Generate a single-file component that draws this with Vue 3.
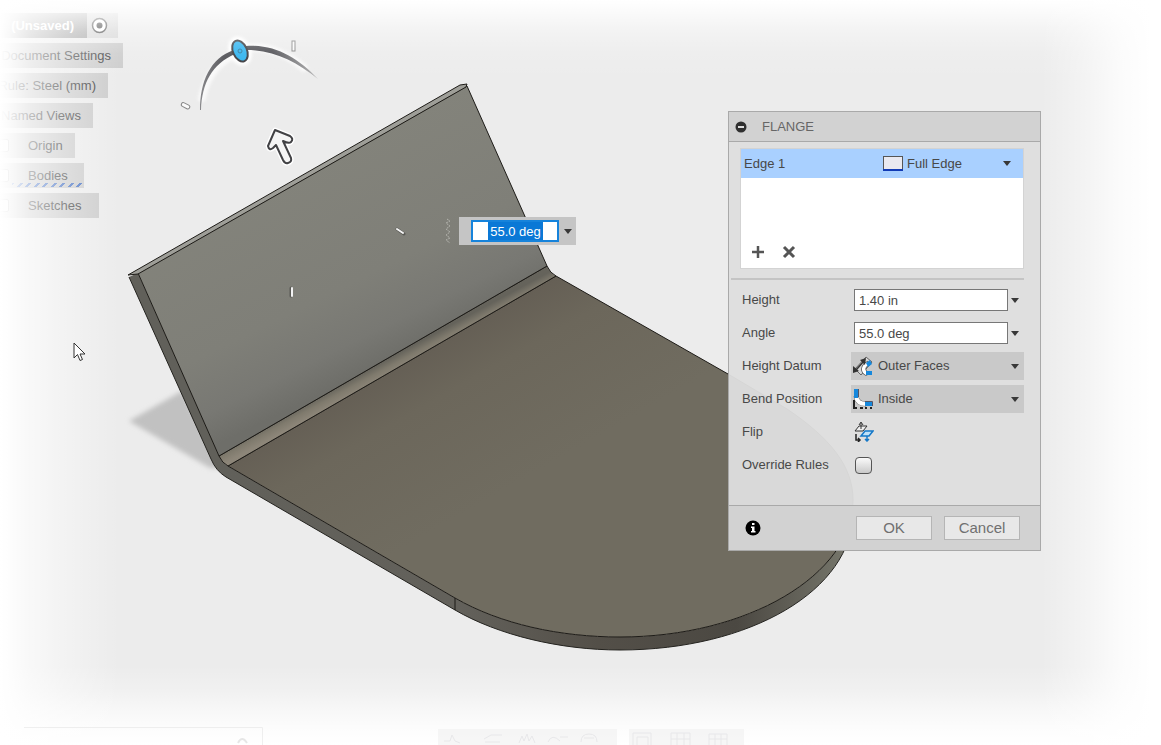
<script setup>
import { ref } from 'vue'

const tree = [
  { label: 'Document Settings', cls: 'w-doc' },
  { label: 'Rule: Steel (mm)', cls: 'w-rule' },
  { label: 'Named Views', cls: 'w-views' },
  { label: 'Origin', cls: 'boxed w-origin', box: true },
  { label: 'Bodies', cls: 'boxed w-bodies', box: true },
  { label: 'Sketches', cls: 'boxed w-sketches', box: true }
]
const height = ref('1.40 in')
const angle = ref('55.0 deg')
const datum = ref('Outer Faces')
const bend = ref('Inside')
const edgeType = ref('Full Edge')
const override = ref(false)
</script>

<template>
  <main class="viewport">
    <svg class="model" width="900" height="700" viewBox="0 0 900 700" aria-hidden="true">
      <defs>
        <linearGradient id="wall" gradientUnits="userSpaceOnUse" x1="290" y1="170" x2="385" y2="362">
          <stop offset="0" stop-color="#83837b" />
          <stop offset=".6" stop-color="#7f7f78" />
          <stop offset=".85" stop-color="#787873" />
          <stop offset="1" stop-color="#6e6e69" />
        </linearGradient>
        <linearGradient id="bendFill" gradientUnits="userSpaceOnUse" x1="384" y1="361" x2="391" y2="374">
          <stop offset="0" stop-color="#65635b" />
          <stop offset=".5" stop-color="#7f7a6d" />
          <stop offset="1" stop-color="#8d8679" />
        </linearGradient>
        <linearGradient id="floor" gradientUnits="userSpaceOnUse" x1="390" y1="370" x2="470" y2="510">
          <stop offset="0" stop-color="#655f55" />
          <stop offset=".3" stop-color="#6c675b" />
          <stop offset="1" stop-color="#706c60" />
        </linearGradient>
        <linearGradient id="rim" gradientUnits="userSpaceOnUse" x1="220" y1="0" x2="850" y2="0">
          <stop offset="0" stop-color="#61605a" />
          <stop offset=".38" stop-color="#63615b" />
          <stop offset=".6" stop-color="#534f48" />
          <stop offset=".82" stop-color="#4b4842" />
          <stop offset="1" stop-color="#77776c" />
        </linearGradient>
        <linearGradient id="arc" gradientUnits="userSpaceOnUse" x1="200" y1="0" x2="320" y2="0">
          <stop offset="0" stop-color="#8b8b8e" />
          <stop offset=".2" stop-color="#4c4c51" />
          <stop offset=".6" stop-color="#4c4c51" />
          <stop offset="1" stop-color="#bcbcbc" />
        </linearGradient>
        <filter id="soft" x="-10%" y="-10%" width="120%" height="120%"><feGaussianBlur stdDeviation="2.5" /></filter>
        <filter id="halo" x="-20%" y="-20%" width="140%" height="140%"><feGaussianBlur stdDeviation="1.5" /></filter>
      </defs>

      <path d="M129 421 L182 391 L222 468 L210 468Z" fill="#c1c1c1" filter="url(#soft)" />

      <path d="M129 277 L138 273 L220 457 Q222 463 228 466 L455 598 C500 624 560 637 620 637 C747 637 853 575 853 500 L853 512 C853 590 750 650 620 650 C560 650 498 635 455 610 L226 477 Q216 471 211 459Z" fill="url(#rim)" />
      <path d="M129 277 L211 459 Q216 471 226 477 L455 610 C498 635 560 650 620 650 C750 650 853 590 853 512" fill="none" stroke="#24231f" stroke-width="1" />
      <path d="M228 466 L556 276 L728 374 L787 409 C830 438 853 466 853 500 C853 575 747 637 620 637 C560 637 500 624 455 598Z" fill="url(#floor)" stroke="#1d1b17" stroke-width="1" />
      <path d="M219 456 L547 266 Q550 273 556 276 L228 466 Q222 463 219 456Z" fill="url(#bendFill)" stroke="#1d1b17" stroke-width="1" />
      <path d="M138 273 L467 86 L547 266 L219 456Z" fill="url(#wall)" stroke="#1d1b17" stroke-width="1" />
      <path d="M128 275 L460 85 L467 84 L466 87 L138 274Z" fill="#9e9e98" stroke="#1d1b17" stroke-width="1" />
      <path d="M455 598V610" stroke="#1d1b17" stroke-width="1" />

      <path d="M202 98 Q208 68 232 56 M245 48 Q276 44 304 68" fill="none" stroke="#fff" stroke-width="8" stroke-linecap="round" filter="url(#halo)" opacity=".7" />
      <ellipse cx="240" cy="51" rx="11" ry="15" fill="#fff" transform="rotate(-24 240 51)" filter="url(#halo)" />
      <path d="M201 110 C202 83 212 64 235 54 L234 50 C210 58 200 82 200 110Z" fill="url(#arc)" />
      <path d="M246 46 C275 44 298 58 318 79 C296 62 275 50 246 50Z" fill="url(#arc)" />
      <ellipse cx="240" cy="51" rx="7" ry="11" fill="#2db2ee" stroke="#38383c" stroke-width="2" transform="rotate(-24 240 51)" />
      <circle cx="240" cy="51" r="2" fill="none" stroke="#28759a" />

      <g fill="#fafafa" stroke="#858585">
        <rect x="181" y="104" width="9" height="4" rx="2" transform="rotate(27 186 106)" />
        <rect x="292" y="41" width="3" height="10" />
      </g>
      <path d="M275 130 L290 136 Q294 139 291 142 Q289 144 283 141 L291 158 Q292 162 288 163 Q285 164 283 160 L276 145 L273 148 Q269 151 268 146Z" fill="#fff" stroke="#fff" stroke-width="5" stroke-linejoin="round" />
      <path d="M275 130 L290 136 Q294 139 291 142 Q289 144 283 141 L291 158 Q292 162 288 163 Q285 164 283 160 L276 145 L273 148 Q269 151 268 146Z" fill="#f5f5f5" stroke="#424245" stroke-width="2" stroke-linejoin="round" />
      <g stroke-linecap="round">
        <path d="M397 229L404 234M291 288V296" stroke="#5a5a56" stroke-width="3" />
        <path d="M397 229L403 233M292 288V296" stroke="#f4f4f4" stroke-width="2" />
      </g>
      <path d="M447 219L450 221L446 223L450 226L446 229L450 232L446 235L450 238L446 240L450 243" fill="none" stroke="#b4b4ae" stroke-dasharray="2 1" />
    </svg>

    <nav class="tree" aria-label="Browser">
      <div class="root">
        <button class="root-name" type="button">(Unsaved)</button>
        <button class="root-radio" type="button" aria-label="Activate">
          <svg width="17" height="17" viewBox="0 0 17 17"><circle cx="8.500" cy="8.500" r="7" fill="#fff" stroke="#444" stroke-width="1.500" /><circle cx="8.500" cy="8.500" r="3" fill="#333" /></svg>
        </button>
      </div>
      <button v-for="item in tree" :key="item.label" class="node" :class="item.cls" type="button">
        <i v-if="item.box" class="node-box"></i>
        <span>{{ item.label }}</span>
      </button>
    </nav>

    <div class="fade"></div>

    <svg class="ghost" width="760" height="18" viewBox="0 0 760 18" aria-hidden="true">
      <path d="M24 .5H262.500V18" fill="none" stroke="#e9e9e9" />
      <path d="M238 16Q242 8 247 16" fill="none" stroke="#ddd" stroke-width="2" />
      <path d="M438 2H617V18H438ZM629 2H744V18H629Z" fill="#f3f3f3" />
      <g fill="none" stroke="#dfdfe2">
        <path d="M444 14H450L452 8L455 14L460 16M484 12L491 8H502M485 15H500M519 16L522 9L524 14L527 7L529 14L532 9L535 16M548 15Q552 6 560 14M560 10H568M581 15Q581 7 589 7Q597 7 597 15M584 11H594" />
        <path d="M633 18V6H651V18M637 18V10H648V18M671 18V6H690V18M671 12H690M677 6V18M684 6V18M709 18V7H727V18M709 12H727M715 7V18M721 7V18" />
      </g>
    </svg>

    <svg class="pointer" width="14" height="20" viewBox="0 0 14 20" aria-hidden="true">
      <path d="M1 1V16L4.500 12.500L7 18.500L9.500 17.500L7 12H12Z" fill="#fff" stroke="#333" />
    </svg>

    <div class="quick">
      <input v-model="angle" aria-label="Flange angle" />
      <button class="caret-btn" type="button" aria-label="Angle options"><i class="caret"></i></button>
    </div>

    <section class="panel" aria-label="Flange">
      <header>
        <button class="collapse" type="button" aria-label="Collapse">
          <svg width="12" height="12" viewBox="0 0 12 12"><circle cx="6" cy="6" r="5.500" fill="#303030" /><path d="M3 6H9" stroke="#ddd" stroke-width="2" /></svg>
        </button>
        <h1>FLANGE</h1>
      </header>

      <div class="content">
        <div class="edges">
          <div class="edge">
            <span>Edge 1</span>
            <div class="edge-type">
              <svg width="20" height="15" viewBox="0 0 20 15" aria-hidden="true"><rect x=".5" y=".5" width="19" height="14" fill="#e9e9f0" stroke="#555" /><path d="M0 14H20" stroke="#123bb5" stroke-width="2" /></svg>
              <select v-model="edgeType" aria-label="Edge type"><option>Full Edge</option></select>
              <i class="caret"></i>
            </div>
          </div>
          <div class="tools">
            <button type="button" aria-label="Add"><svg width="14" height="14" viewBox="0 0 14 14"><path d="M7 1V13M1 7H13" stroke="#555" stroke-width="2.500" /></svg></button>
            <button type="button" aria-label="Remove"><svg width="14" height="14" viewBox="0 0 14 14"><path d="M2 2L12 12M12 2L2 12" stroke="#555" stroke-width="3" /></svg></button>
          </div>
        </div>
        <hr />
        <form class="fields" @submit.prevent>
          <label for="height">Height</label>
          <div class="combo"><input id="height" v-model="height" /><button class="caret-btn" type="button" aria-label="Height options"><i class="caret"></i></button></div>

          <label for="angle">Angle</label>
          <div class="combo"><input id="angle" v-model="angle" /><button class="caret-btn" type="button" aria-label="Angle options"><i class="caret"></i></button></div>

          <label for="datum">Height Datum</label>
          <div class="drop">
            <svg width="20" height="20" viewBox="0 0 20 20" aria-hidden="true">
              <path d="M2 13L13 1L19 6L8 19Z" fill="#d8d8d8" stroke="#666" />
              <path d="M16 7C9 10 9 16 15 18" fill="none" stroke="#555" stroke-width="5" />
              <path d="M16 7C9 10 9 16 15 18" fill="none" stroke="#fff" stroke-width="3.500" />
              <path d="M13 7L17 4L19 8L15 11ZM13 15H19V19H13Z" fill="#1688dc" />
              <path d="M3 14L11 5" stroke="#333" stroke-width="1.500" />
              <path d="M0 17V10L6 15ZM13 2L7 4L12 9Z" fill="#333" />
            </svg>
            <select id="datum" v-model="datum"><option>Outer Faces</option></select>
            <i class="caret"></i>
          </div>

          <label for="bend">Bend Position</label>
          <div class="drop">
            <svg width="20" height="20" viewBox="0 0 20 20" aria-hidden="true">
              <path d="M3 7Q4 15 13 15" fill="none" stroke="#666" stroke-width="5" />
              <path d="M3 7Q4 15 13 15" fill="none" stroke="#fff" stroke-width="4" />
              <path d="M1 0H5V9H1ZM12 13H19V17H12Z" fill="#1688dc" />
              <path d="M5.500 0V8M12 12.500H19.500V17" fill="none" stroke="#556" />
              <path d="M1 11V19H4M7 19H10M12 19H14M17 19H19" fill="none" stroke="#222" stroke-width="2" />
            </svg>
            <select id="bend" v-model="bend"><option>Inside</option></select>
            <i class="caret"></i>
          </div>

          <label for="flip">Flip</label>
          <button id="flip" class="flip" type="button">
            <svg width="20" height="20" viewBox="0 0 20 20" aria-hidden="true">
              <path d="M1 9L5 4H13L9 9Z" fill="#eee" stroke="#333" />
              <path d="M7 7V1M5 3L7 0L9 3" fill="none" stroke="#333" />
              <path d="M7 14L11 9H19L15 14Z" fill="#bfe1f8" stroke="#1478c8" stroke-width="1.500" />
              <path d="M13 14V19M11 17L13 19L15 17" fill="none" stroke="#1478c8" stroke-width="1.500" />
              <path d="M2 12V18H6M4 16L6 18L4 20" fill="none" stroke="#222" stroke-width="1.500" />
            </svg>
          </button>

          <label for="override">Override Rules</label>
          <input id="override" v-model="override" type="checkbox" />
        </form>
      </div>

      <footer>
        <button class="info" type="button" aria-label="Information">
          <svg width="16" height="16" viewBox="0 0 16 16"><circle cx="8" cy="8" r="7.500" fill="#000" /><path d="M7 3H9.500V5H7ZM6 6.500H9.500V11H10.500V12.500H6V11H7V8H6Z" fill="#fff" /></svg>
        </button>
        <button class="action" type="button">OK</button>
        <button class="action" type="button">Cancel</button>
      </footer>
    </section>
  </main>
</template>

<style>
body { margin: 0; background: #fff; }
</style>

<style scoped>
.viewport {
  position: relative;
  min-height: 100vh;
  overflow: hidden;
  background: #ececec;
  color: #484848;
  font: 13px/16px "Liberation Sans", Arial, sans-serif;
}
button, input, select { font: inherit; color: inherit; margin: 0; box-sizing: border-box; border-radius: 0; }
button { background: none; border: 0; padding: 0; }
svg { display: block; flex: none; }
.model { position: absolute; left: 0; top: 0; }

.tree { display: flex; flex-direction: column; align-items: flex-start; gap: 5px; padding-top: 13px; }
.root { display: flex; width: 118px; height: 25px; background: #d6d6d6; }
.root-name { display: flex; justify-content: flex-end; align-items: center; width: 87px; padding-right: 13px; background: #a0a0a0; color: #fff; font-weight: bold; }
.root-radio { display: flex; align-items: center; padding-left: 4px; }
.node { position: relative; display: flex; justify-content: flex-end; align-items: center; height: 25px; padding-right: 12px; background: #cdcdcd; white-space: nowrap; }
.boxed { justify-content: flex-start; padding: 0 0 0 28px; }
.w-doc { width: 123px; }
.w-rule { width: 108px; }
.w-views { width: 93px; }
.w-origin { width: 75px; }
.w-bodies { width: 84px; }
.w-sketches { width: 99px; }
.w-bodies::after {
  content: "";
  position: absolute;
  left: 12px;
  right: 2px;
  bottom: 1px;
  height: 4px;
  background: repeating-linear-gradient(135deg, #4a74c4 0 2px, transparent 2px 6px);
}
.node-box { position: absolute; left: -4px; top: 6px; width: 11px; height: 11px; border: 1px solid #777; border-radius: 2px; background: #eee; }

.fade {
  position: absolute;
  inset: 0;
  pointer-events: none;
  background:
    linear-gradient(to right, #fff 0, rgba(255,255,255,.9) 10px, rgba(255,255,255,.65) 30px, rgba(255,255,255,.36) 64px, rgba(255,255,255,.15) 96px, rgba(255,255,255,0) 120px),
    linear-gradient(to left, #fff 0, #fff 10px, rgba(255,255,255,.8) 40px, rgba(255,255,255,.35) 80px, rgba(255,255,255,0) 120px),
    linear-gradient(to bottom, #fff 0, rgba(255,255,255,.8) 10px, rgba(255,255,255,.35) 32px, rgba(255,255,255,.1) 54px, rgba(255,255,255,0) 80px),
    linear-gradient(to top, #fff 0, rgba(255,255,255,.85) 18px, rgba(255,255,255,.6) 35px, rgba(255,255,255,.25) 55px, rgba(255,255,255,0) 80px);
}
.ghost { position: absolute; left: 0; bottom: 0; opacity: .7; }
.pointer { position: absolute; left: 73px; top: 342px; }

.caret { display: block; flex: none; border: 4px solid transparent; border-top: 5px solid #383838; border-bottom: 0; pointer-events: none; }
.caret-btn { display: flex; align-items: center; justify-content: center; align-self: stretch; width: 14px; }

.quick { position: absolute; left: 459px; top: 217px; display: flex; align-items: center; gap: 2px; padding: 3px 1px 3px 12px; background: #c5c5c5; }
.quick input {
  width: 88px;
  height: 22px;
  padding: 0 14px 0 15px;
  border: 2px solid #1683db;
  outline: 0;
  background: linear-gradient(#0a78d6, #0a78d6) content-box, #fff;
  color: #fff;
  text-align: center;
}

.panel { position: absolute; left: 728px; top: 111px; width: 313px; box-sizing: border-box; border: 1px solid #a9a9a9; background: rgba(222,222,222,.96); }
header { display: flex; align-items: center; gap: 15px; height: 29px; padding-left: 6px; background: #d2d2d2; border-bottom: 1px solid #a9a9a9; }
h1 { margin: 0; font: inherit; color: #666; }
.content { padding: 6px 16px 26px 2px; }
.edges { display: flex; flex-direction: column; justify-content: space-between; height: 119px; margin-left: 9px; border: 1px solid #d3d3d3; background: #fff; box-sizing: content-box; }
.edge { display: flex; align-items: center; justify-content: space-between; height: 29px; padding: 0 12px 0 3px; background: #a9d0ff; }
.edge-type { display: flex; align-items: center; width: 128px; gap: 4px; }
select { flex: 1; min-width: 0; height: 24px; appearance: none; border: 0; background: transparent; padding: 0; outline: 0; }
.tools { display: flex; gap: 17px; padding: 0 10px 9px; }
hr { width: auto; height: 2px; margin: 9px 0 6px; border: 0; background: #c4c4c4; }
.fields { display: grid; grid-template-columns: 109px minmax(0, 1fr); grid-auto-rows: 28px; row-gap: 5px; align-items: center; padding-left: 11px; }
.combo { display: flex; align-items: center; height: 22px; padding: 0 2px 0 3px; }
.combo input { flex: 1; min-width: 0; height: 22px; padding: 0 4px; border: 1px solid #777; background: #fff; outline: 0; }
.drop { display: flex; align-items: center; gap: 5px; height: 28px; padding: 0 5px 0 2px; background: #c9c9c9; }
.flip { justify-self: start; margin-left: 3px; }
#override { appearance: none; width: 17px; height: 17px; margin-left: 4px; border: 1px solid #555; border-radius: 4px; background: linear-gradient(#fafafa, #c9c9c9); }
footer { display: flex; align-items: center; gap: 12px; height: 44px; padding: 0 20px 0 16px; background: #d2d2d2; border-top: 1px solid #a9a9a9; }
.info { margin-right: auto; }
.action { width: 76px; height: 24px; border: 1px solid #b5b5b5; background: #e8e8e8; color: #707070; font-size: 15px; }
</style>
